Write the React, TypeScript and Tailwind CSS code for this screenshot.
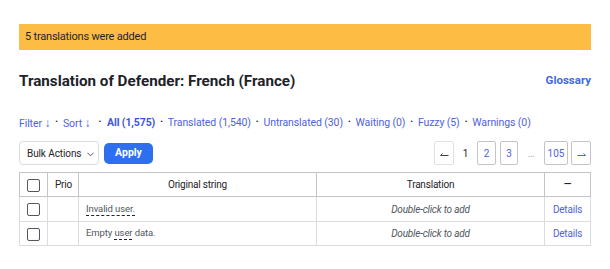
import React from "react";

function Box() {
  return <span className="inline-block w-[13px] h-[13px] border border-[#50575e] rounded-[2px] bg-white align-middle" />;
}

function Sep() {
  return <span className="text-[#1d2327] text-[8px] mx-[5px] relative top-[-1px]">•</span>;
}

export default function App() {
  const link = "text-[#4f62e0]";
  return (
    <div className="bg-white w-[610px] h-[269px] px-[19px] pt-[24px] font-['Roboto',sans-serif] text-[#1d2327]">
      <div className="h-[26px] bg-[#fdbd45] pl-[6px] flex items-center text-[11px] tracking-[-0.2px] text-[#1d2327]">
        5 translations were added
      </div>
      <div className="mt-[20px] h-[22px] flex items-center justify-between">
        <h1 className="text-[15.2px] font-bold text-[#1d2327]">Translation of Defender: French (France)</h1>
        <a className="text-[11.5px] font-bold text-[#3f6ae5]">Glossary</a>
      </div>
      <div className="mt-[24px] h-[14px] flex items-center text-[10.5px] tracking-[-0.1px] whitespace-nowrap">
        <a className={link}>Filter <span className="text-[12px]">↓</span></a>
        <Sep />
        <a className={link}>Sort <span className="text-[12px]">↓</span></a>
        <span className="w-[3px]" />
        <Sep />
        <a className="text-[#3a55dd] font-bold ml-[1px]">All (1,575)</a>
        <Sep />
        <a className={link}>Translated (1,540)</a>
        <Sep />
        <a className={link}>Untranslated (30)</a>
        <Sep />
        <a className={link}>Waiting (0)</a>
        <Sep />
        <a className={link}>Fuzzy (5)</a>
        <Sep />
        <a className={link}>Warnings (0)</a>
      </div>
      <div className="mt-[11px] h-[24px] flex items-center justify-between">
        <div className="flex items-center">
          <div className="w-[80px] h-[24px] border border-[#dcdcde] rounded-[4px] flex items-center pl-[7px] text-[10px] tracking-[-0.1px] text-[#1d2327] whitespace-nowrap">
            <span>Bulk Actions</span>
            <svg className="ml-[6px] mt-[3px]" width="7" height="5" viewBox="0 0 7 5"><path d="M0.5 0.8 L3.5 3.8 L6.5 0.8" stroke="#50575e" strokeWidth="1" fill="none" /></svg>
          </div>
          <button className="ml-[5px] w-[49px] h-[21px] rounded-[5px] bg-[#2e6ff0] text-white text-[10.5px] font-bold">Apply</button>
        </div>
        <div className="flex items-center text-[10px]">
          <span className="w-[20px] h-[24px] border border-[#e0e0e0] rounded-[2px] flex items-center justify-center">
            <svg className="mt-[3px]" width="9" height="5" viewBox="0 0 9 5"><path d="M0.5 3.5 H8.5 M0.5 3.5 L2.5 1.5" stroke="#3c434a" strokeWidth="1" fill="none" /></svg>
          </span>
          <span className="w-[23px] text-center text-[#1d2327]">1</span>
          <span className="w-[19px] h-[24px] border border-[#c3c4c7] rounded-[2px] flex items-center justify-center text-[#4f62e0]">2</span>
          <span className="ml-[4px] w-[18px] h-[24px] border border-[#c3c4c7] rounded-[2px] flex items-center justify-center text-[#4f62e0]">3</span>
          <span className="w-[26px] text-center text-[#a7aaad]">…</span>
          <span className="w-[24px] h-[24px] border border-[#c3c4c7] rounded-[2px] flex items-center justify-center text-[#4f62e0]">105</span>
          <span className="ml-[3px] w-[20px] h-[24px] border border-[#c3c4c7] rounded-[2px] flex items-center justify-center">
            <svg className="mt-[3px]" width="9" height="5" viewBox="0 0 9 5"><path d="M0.5 3.5 H8.5 M8.5 3.5 L6.5 1.5" stroke="#4f62e0" strokeWidth="1" fill="none" /></svg>
          </span>
        </div>
      </div>
      <table className="mt-[7px] w-[571px] table-fixed border-collapse text-[10px] tracking-[-0.2px]">
        <colgroup>
          <col className="w-[28px]" />
          <col className="w-[31px]" />
          <col className="w-[238px]" />
          <col className="w-[228px]" />
          <col className="w-[46px]" />
        </colgroup>
        <thead>
          <tr className="h-[24px]">
            <th className="border border-[#c3c4c7] text-center p-0"><Box /></th>
            <th className="border border-[#c3c4c7] text-left font-normal pl-[7px] text-[#1d2327]">Prio</th>
            <th className="border border-[#c3c4c7] font-normal text-center text-[#1d2327]">Original string</th>
            <th className="border border-[#c3c4c7] font-normal text-center text-[#1d2327]">Translation</th>
            <th className="border border-[#c3c4c7] font-medium text-center text-[#1d2327]">—</th>
          </tr>
        </thead>
        <tbody>
          <tr className="h-[25px]">
            <td className="border border-[#dcdcde] text-center p-0"><Box /></td>
            <td className="border border-[#dcdcde]" />
            <td className="border border-[#dcdcde] pl-[7px] text-[#50575e] text-[9.5px] tracking-[-0.1px]">
              <span className="border-b border-dashed border-[#1d2327] pb-[1px]">Invalid user.</span>
            </td>
            <td className="border border-[#dcdcde] text-center italic text-[#50575e]">Double-click to add</td>
            <td className="border border-[#dcdcde] text-center text-[#4f62e0]">Details</td>
          </tr>
          <tr className="h-[24px]">
            <td className="border border-[#dcdcde] text-center p-0"><Box /></td>
            <td className="border border-[#dcdcde]" />
            <td className="border border-[#dcdcde] pl-[7px] text-[#50575e] text-[9.5px] tracking-[-0.1px]">
              Empty <span className="border-b border-dashed border-[#1d2327] pb-[1px]">user</span> data.
            </td>
            <td className="border border-[#dcdcde] text-center italic text-[#50575e]">Double-click to add</td>
            <td className="border border-[#dcdcde] text-center text-[#4f62e0]">Details</td>
          </tr>
        </tbody>
      </table>
    </div>
  );
}
